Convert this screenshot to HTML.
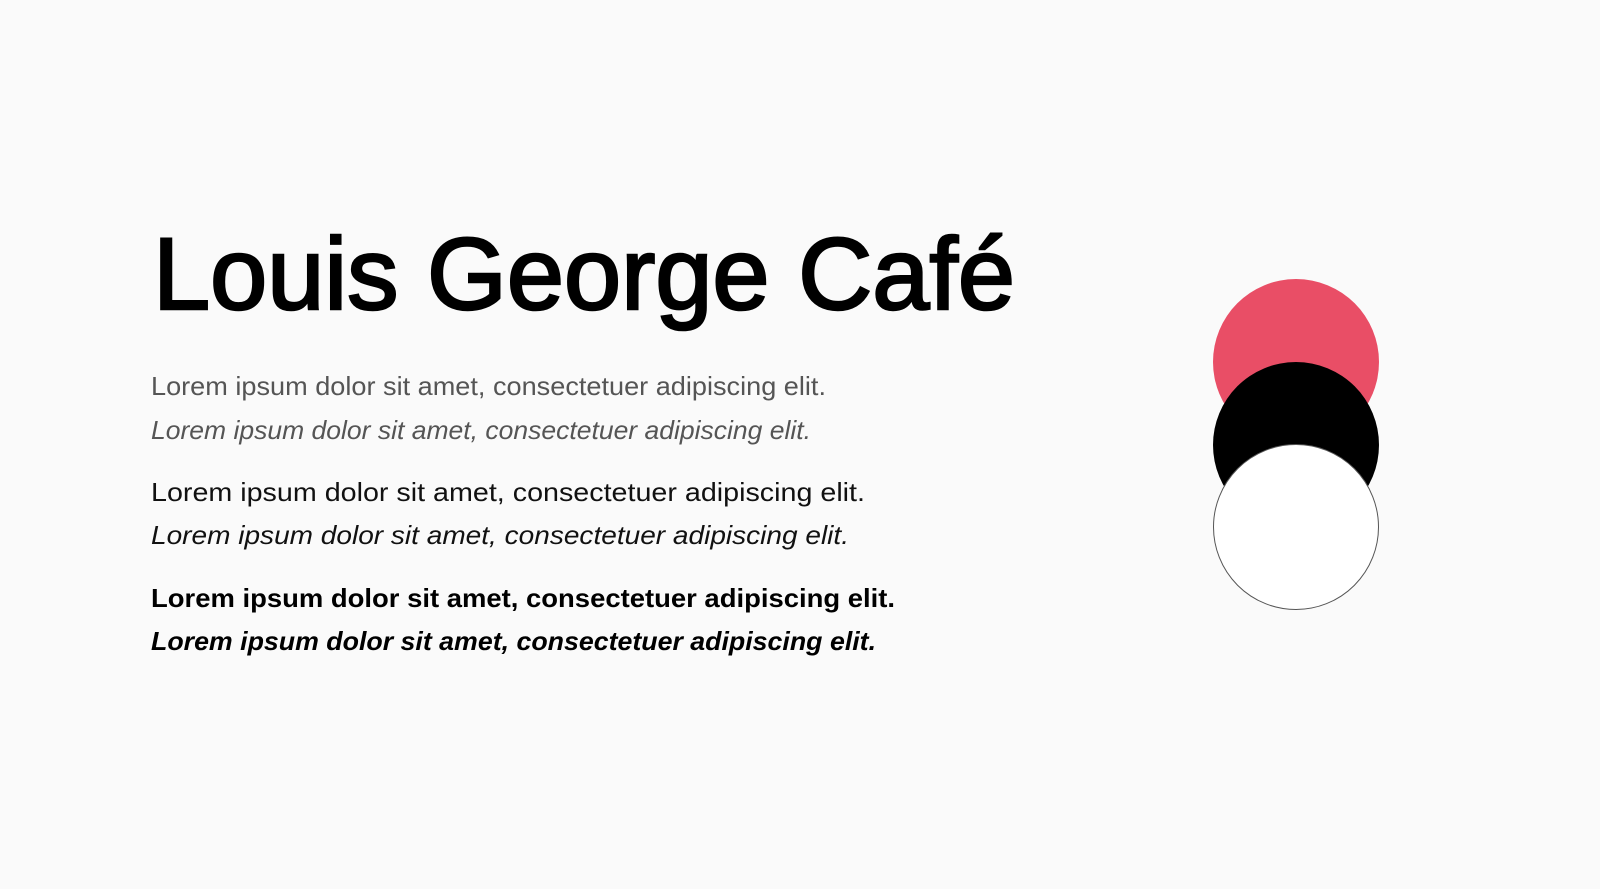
<!DOCTYPE html>
<html><head><meta charset="utf-8"><style>
html,body{margin:0;padding:0;background:#fafafa;width:1600px;height:889px;overflow:hidden}
svg{position:absolute;left:0;top:0}
text{font-family:"Liberation Sans",sans-serif}
</style></head><body>
<svg width="1600" height="889" viewBox="0 0 1600 889">
<rect width="1600" height="889" fill="#fafafa"/>
<text x="153" y="309" font-size="102" fill="#000" stroke="#000" stroke-width="2.5" textLength="862" lengthAdjust="spacingAndGlyphs">Louis George Café</text>
<text x="151" y="395" font-size="26" fill="#555" textLength="675" lengthAdjust="spacingAndGlyphs">Lorem ipsum dolor sit amet, consectetuer adipiscing elit.</text>
<text x="151" y="439" font-size="26" font-style="italic" fill="#555" textLength="660" lengthAdjust="spacingAndGlyphs">Lorem ipsum dolor sit amet, consectetuer adipiscing elit.</text>
<text x="151" y="501" font-size="26" fill="#111" textLength="714" lengthAdjust="spacingAndGlyphs">Lorem ipsum dolor sit amet, consectetuer adipiscing elit.</text>
<text x="151" y="544" font-size="26" font-style="italic" fill="#111" textLength="698" lengthAdjust="spacingAndGlyphs">Lorem ipsum dolor sit amet, consectetuer adipiscing elit.</text>
<text x="151" y="607" font-size="26" font-weight="bold" fill="#000" textLength="744" lengthAdjust="spacingAndGlyphs">Lorem ipsum dolor sit amet, consectetuer adipiscing elit.</text>
<text x="151" y="650" font-size="26" font-weight="bold" font-style="italic" fill="#000" textLength="725" lengthAdjust="spacingAndGlyphs">Lorem ipsum dolor sit amet, consectetuer adipiscing elit.</text>
<circle cx="1296" cy="362" r="83" fill="#e94e66"/>
<circle cx="1296" cy="445" r="83" fill="#000"/>
<circle cx="1296" cy="527" r="82.5" fill="#fff" stroke="#555" stroke-width="1"/>
</svg>
</body></html>
